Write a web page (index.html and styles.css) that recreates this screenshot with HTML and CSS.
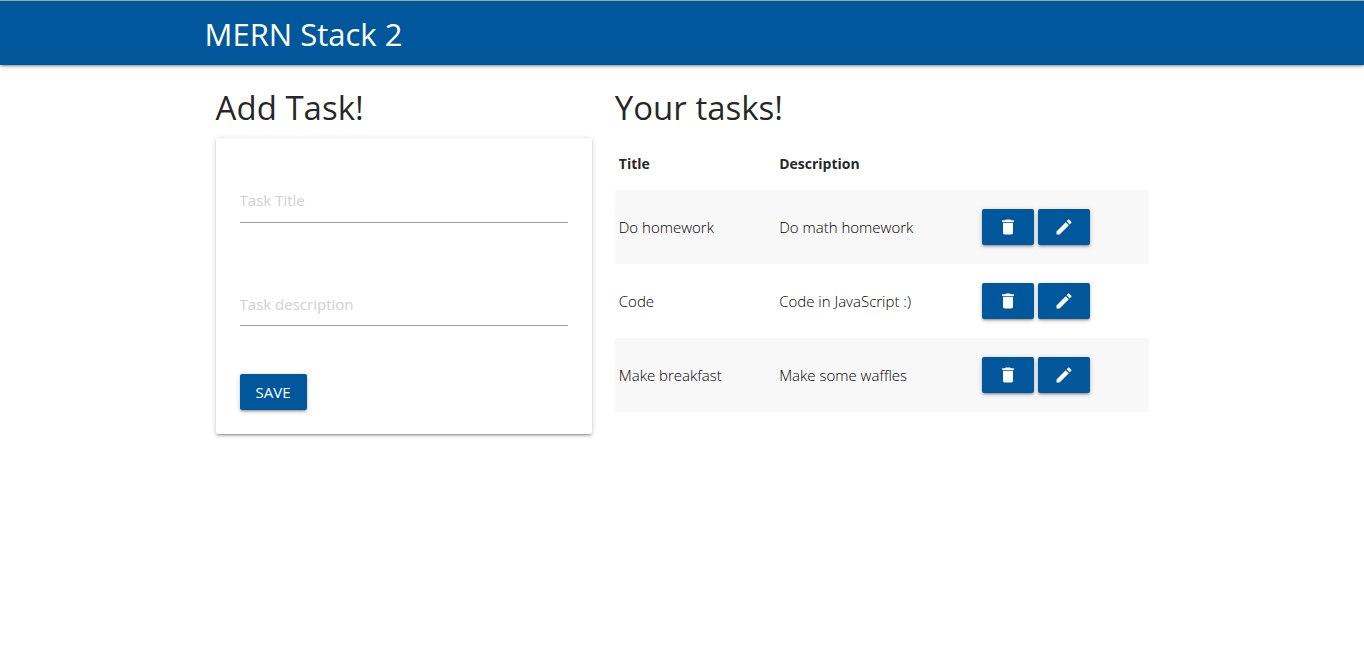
FILE: index.html
```html
<!DOCTYPE html>
<html lang="en">
<head>
<meta charset="utf-8">
<meta name="viewport" content="width=device-width, initial-scale=1">
<title>MERN Stack 2</title>
<link rel="stylesheet" href="styles.css">
</head>
<body>
<svg class="sprite" aria-hidden="true">
  <symbol id="trash" viewBox="0 0 24 24"><path d="M6 19c0 1.1.9 2 2 2h8c1.1 0 2-.9 2-2V7H6v12zM19 4h-3.5l-1-1h-5l-1 1H5v2h14V4z"/></symbol>
  <symbol id="pencil" viewBox="0 0 24 24"><path d="M3 17.250V21h3.750L17.810 9.940l-3.750-3.750L3 17.250zM20.710 7.040c.39-.39.39-1.020 0-1.410l-2.340-2.340c-.39-.39-1.020-.39-1.410 0l-1.830 1.830 3.750 3.750 1.830-1.830z"/></symbol>
</svg>
<header class="navbar">
  <nav class="container"><a class="brand" href="#">MERN Stack 2</a></nav>
</header>
<main class="container row">
  <section>
    <h1 class="heading">Add Task!</h1>
    <form class="card">
      <input class="field" type="text" placeholder="Task Title" aria-label="Task Title">
      <textarea class="field field-area" rows="1" placeholder="Task description" aria-label="Task description"></textarea>
      <button class="btn" type="button">SAVE</button>
    </form>
  </section>
  <section>
    <h1 class="heading">Your tasks!</h1>
    <table class="tasks">
      <colgroup><col class="c-title"><col class="c-desc"><col></colgroup>
      <thead><tr><th>Title</th><th>Description</th><td></td></tr></thead>
      <tbody>
        <tr><td>Do homework</td><td>Do math homework</td><td><div class="actions"><button class="btn" type="button" aria-label="Delete"><svg class="icon"><use href="#trash"/></svg></button><button class="btn" type="button" aria-label="Edit"><svg class="icon"><use href="#pencil"/></svg></button></div></td></tr>
        <tr><td>Code</td><td>Code in JavaScript :)</td><td><div class="actions"><button class="btn" type="button" aria-label="Delete"><svg class="icon"><use href="#trash"/></svg></button><button class="btn" type="button" aria-label="Edit"><svg class="icon"><use href="#pencil"/></svg></button></div></td></tr>
        <tr><td>Make breakfast</td><td>Make some waffles</td><td><div class="actions"><button class="btn" type="button" aria-label="Delete"><svg class="icon"><use href="#trash"/></svg></button><button class="btn" type="button" aria-label="Edit"><svg class="icon"><use href="#pencil"/></svg></button></div></td></tr>
      </tbody>
    </table>
  </section>
</main>
</body>
</html>
```
FILE: styles.css
```css
* { box-sizing: border-box; }
body {
  margin: 0;
  background: #fff;
  color: rgba(0, 0, 0, 0.87);
  font-family: "Open Sans", "Noto Sans", sans-serif;
  font-size: 15px;
  line-height: 22px;
}
.sprite { position: absolute; width: 0; height: 0; }
.container { width: 70%; max-width: 1280px; margin: 0 auto; }
.navbar {
  border-top: 1px solid #a5a5a5;
  background: #01579b;
  box-shadow: 0 2px 2px rgba(0, 0, 0, 0.14), 0 3px 1px -2px rgba(0, 0, 0, 0.12), 0 1px 5px rgba(0, 0, 0, 0.2);
}
.brand {
  display: inline-block;
  padding-top: 2px;
  color: #fff;
  font-size: 31px;
  line-height: 62px;
  text-decoration: none;
}
.row {
  display: grid;
  grid-template-columns: 19fr 27fr;
  column-gap: 23px;
  padding: 23px 10px 24px 11px;
}
.heading {
  margin: 0 0 11px;
  font-size: 33px;
  font-weight: 400;
  line-height: 39px;
}
.card {
  padding: 24px;
  border-radius: 2px;
  background: #fff;
  box-shadow: 0 2px 2px rgba(0, 0, 0, 0.14), 0 3px 1px -2px rgba(0, 0, 0, 0.12), 0 1px 5px rgba(0, 0, 0, 0.2);
}
.field {
  display: block;
  width: 100%;
  height: 46px;
  margin: 15px 0 48px;
  padding: 0;
  border: 0;
  border-bottom: 1px solid #9e9e9e;
  background: transparent;
  font: inherit;
  outline: none;
}
.field::placeholder { color: #d1d1d1; }
.field-area {
  height: 55px;
  padding-top: 22px;
  resize: none;
  overflow: hidden;
}
.btn {
  height: 36px;
  padding: 0 16px;
  border: 0;
  border-radius: 2px;
  background: #01579b;
  color: #fff;
  font: inherit;
  box-shadow: 0 2px 2px rgba(0, 0, 0, 0.14), 0 3px 1px -2px rgba(0, 0, 0, 0.12), 0 1px 5px rgba(0, 0, 0, 0.2);
}
.tasks { width: 100%; border-collapse: collapse; table-layout: fixed; }
.c-title { width: 30%; }
.c-desc { width: 38%; }
.tasks th, .tasks td { padding: 15px 4px; text-align: left; }
.tasks th { font-size: 14px; }
.tasks tbody td { height: 74px; color: #000; font-weight: 300; }
.tasks tbody tr:nth-child(odd) { background: #f8f8f8; }
.actions { display: flex; gap: 4px; }
.icon { display: block; width: 20px; height: 20px; fill: #fff; }
```
